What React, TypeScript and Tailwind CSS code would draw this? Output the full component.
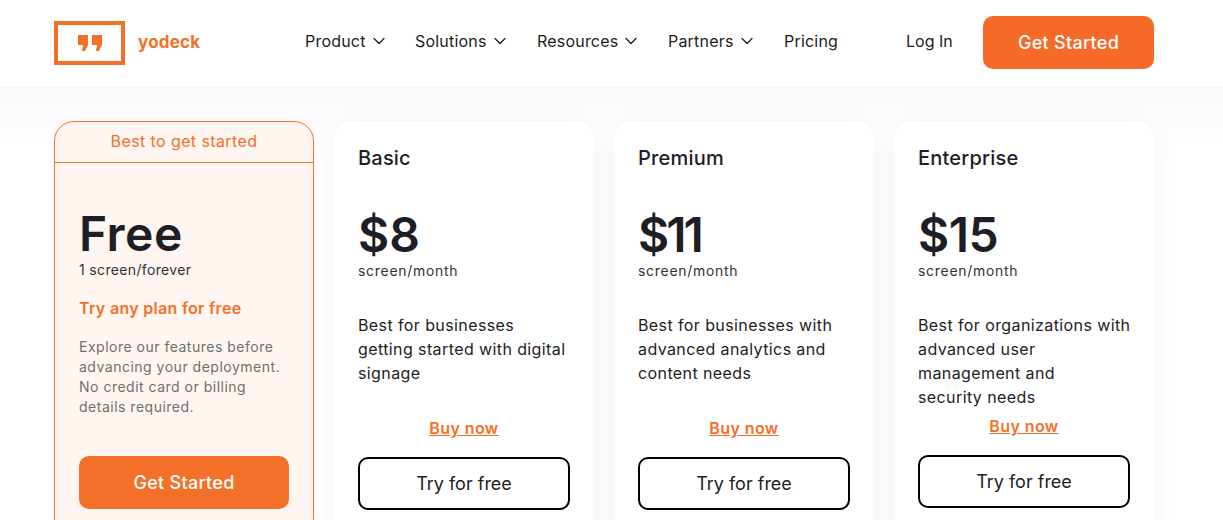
import React from "react";
import { ChevronDown } from "lucide-react";

const F = "font-['Inter',sans-serif]";

function NavItem({ label, w }: { label: string; w: string }) {
  return (
    <div className={`flex items-center gap-[3px] ${w}`}>
      <span className="text-[16px] tracking-[0.2px] text-[#1c1c1c]">{label}</span>
      <ChevronDown size={20} strokeWidth={1.5} className="text-[#1c1c1c]" />
    </div>
  );
}

function Plan({ name, price, priceClass, lines, compact }: { name: string; price: string; priceClass?: string; lines: string[]; compact?: boolean }) {
  return (
    <div className="w-[260px] h-[420px] bg-white rounded-[20px] shadow-[0_8px_30px_rgba(0,0,0,0.06)] px-6 pt-[24px]">
      <div className="text-[20px] leading-[26px] font-medium tracking-[0.2px] text-[#1e1e26]">{name}</div>
      <div className={`mt-[34px] text-[48px] leading-[60px] font-semibold text-[#1e1e26] ${priceClass ?? ""}`}>{price}</div>
      <div className="mt-[-4px] text-[14px] leading-[20px] tracking-[0.7px] text-[#333]">screen/month</div>
      <div className="mt-[32px] h-[96px] whitespace-nowrap text-[16px] leading-6 tracking-[0.4px] text-[#222]">
        {lines.map((l) => <div key={l}>{l}</div>)}
      </div>
      <div className={`${compact ? "mt-[6px]" : "mt-[8px]"} text-center text-[16px] leading-[22px] tracking-[0.4px] font-semibold text-[#f47028] underline`}>Buy now</div>
      <div className={`mt-[18px] w-[212px] h-[53px] rounded-[10px] border-2 border-black flex items-center justify-center text-[18px] text-[#222]`}>Try for free</div>
    </div>
  );
}

export default function App() {
  return (
    <div className={`${F} w-[1223px] h-[520px] overflow-hidden bg-white`}>
      <header className="h-[87px] bg-white flex items-center pl-[54px] pb-[2px]">
        <div className="flex items-center w-[251px]">
          <div className="w-[71px] h-[44px] border-[4px] border-[#f47028] flex items-center justify-center">
            <svg width="24" height="16" viewBox="0 0 24 16">
              <path d="M0 0h10v10l-3 6H4l1-6H0z M14 0h10v10l-3 6h-3l1-6h-5z" fill="#f47028" />
            </svg>
          </div>
          <span className="ml-[13px] text-[17px] font-bold tracking-[0.2px] text-[#f47028]">yodeck</span>
        </div>
        <nav className="flex items-center mb-[4px]">
          <NavItem label="Product" w="w-[110px]" />
          <NavItem label="Solutions" w="w-[122px]" />
          <NavItem label="Resources" w="w-[131px]" />
          <NavItem label="Partners" w="w-[116px]" />
          <span className="text-[16px] tracking-[0.2px] text-[#1c1c1c] w-[122px]">Pricing</span>
        </nav>
        <span className="mb-[4px] text-[16px] tracking-[0px] text-[#1c1c1c] w-[77px]">Log In</span>
        <div className="w-[171px] h-[53px] rounded-[10px] bg-[#f66a28] text-white text-[18px] tracking-[0.3px] font-medium flex items-center justify-center">Get Started</div>
      </header>
      <main className="h-[433px] bg-gradient-to-b from-[#f8f8f8] to-white to-[60px] pl-[54px] pt-[34px] flex gap-5">
        <div className="w-[260px] h-[420px] rounded-[20px] border border-[#f47028] bg-[#fff5f1] flex flex-col">
          <div className="h-[41px] shrink-0 pb-[2px] border-b border-[#f47028] flex items-center justify-center text-[16px] tracking-[0.4px] text-[#f47028]">Best to get started</div>
          <div className="px-6 pt-[41px]">
            <div className="text-[48px] leading-[60px] font-semibold tracking-[0.5px] text-[#1e1e26]">Free</div>
            <div className="mt-[-4px] text-[14px] leading-[20px] tracking-[0.35px] text-[#333]">1 screen/forever</div>
            <div className="mt-[17px] text-[16px] leading-[22px] tracking-[0.3px] font-semibold text-[#f47028]">Try any plan for free</div>
            <div className="mt-[18px] text-[14px] leading-5 tracking-[0.5px] text-[#6f6f6f]">
              <div>Explore our features before</div>
              <div>advancing your deployment.</div>
              <div>No credit card or billing</div>
              <div>details required.</div>
            </div>
            <div className="mt-[39px] w-[210px] h-[53px] rounded-[10px] bg-[#f47028] text-white text-[18px] tracking-[0.3px] font-medium flex items-center justify-center">Get Started</div>
          </div>
        </div>
        <Plan name="Basic" price="$8" lines={["Best for businesses", "getting started with digital", "signage"]} />
        <Plan name="Premium" price="$11" priceClass="tracking-[-3px]" lines={["Best for businesses with", "advanced analytics and", "content needs"]} />
        <Plan name="Enterprise" price="$15" priceClass="tracking-[-0.5px]" lines={["Best for organizations with", "advanced user", "management and", "security needs"]} compact />
      </main>
    </div>
  );
}
